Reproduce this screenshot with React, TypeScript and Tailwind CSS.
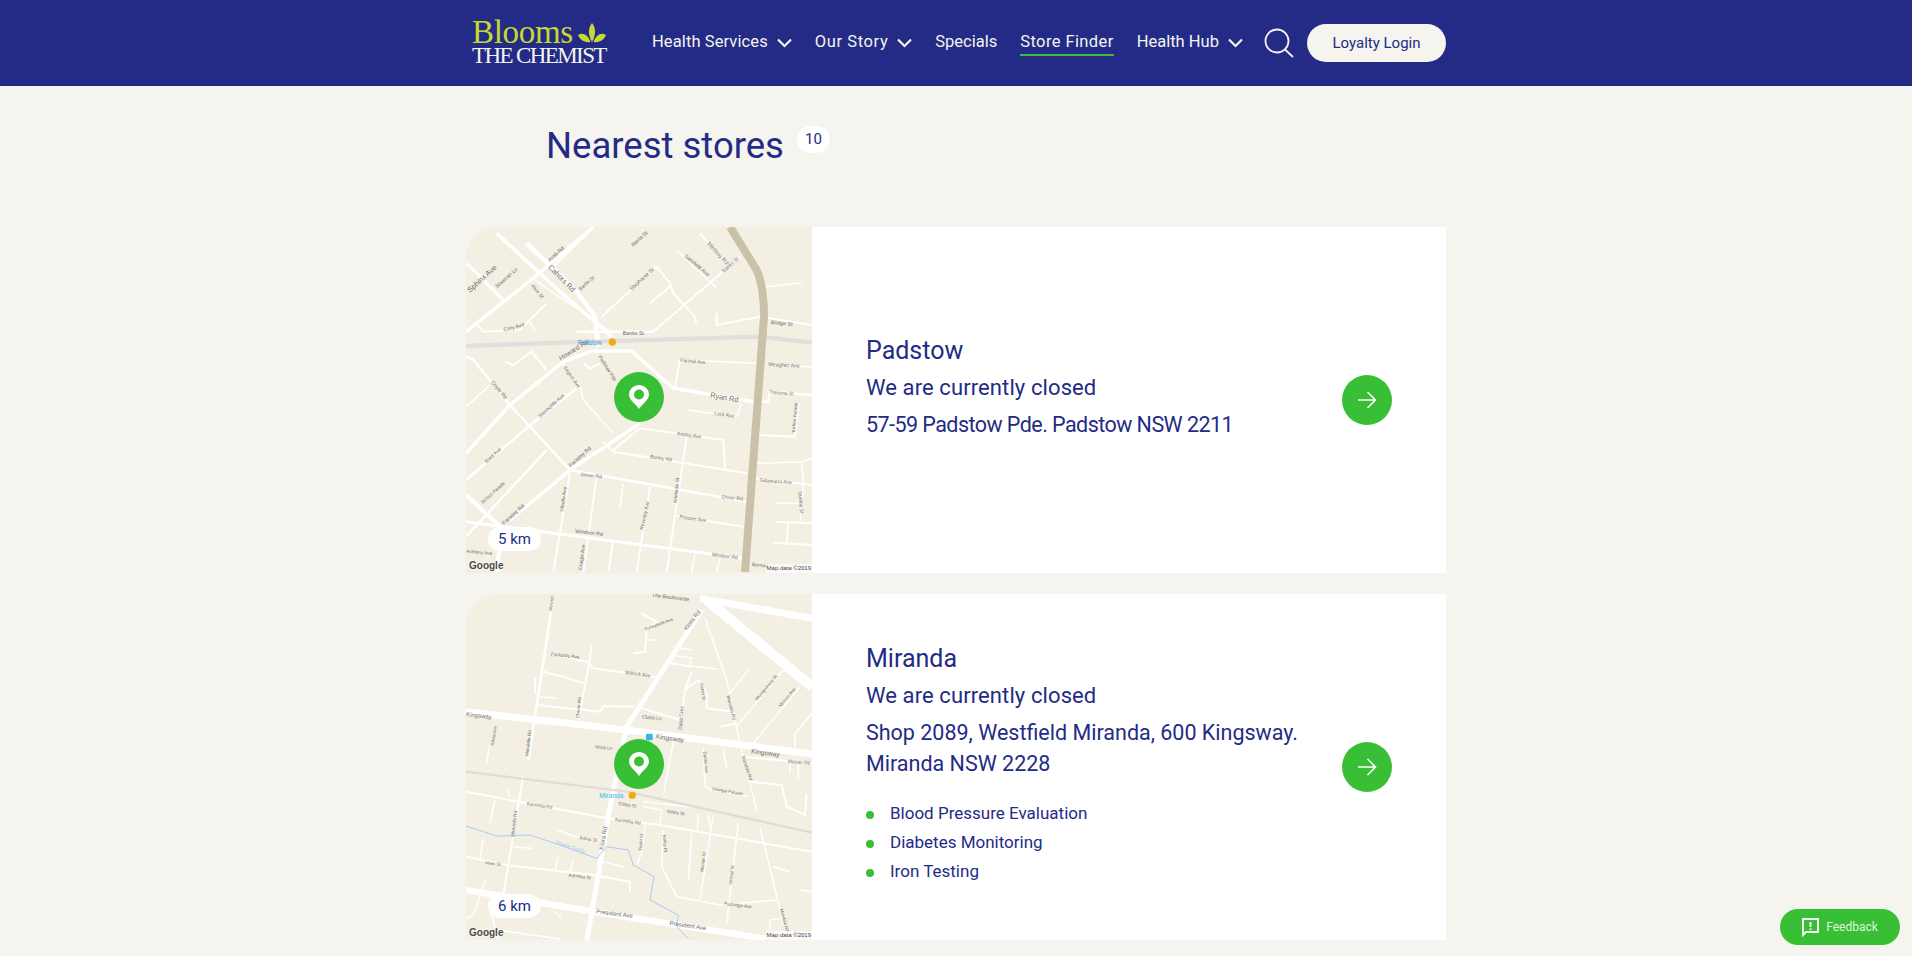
type Road = [number, string];
type Label = [string, number, number, number, number?, string?];

const navy = "text-[#232b86]";

const padstowRoads: Road[] = [
  [7, "18,335 225,170 400,21"],
  [7, "110,40 300,215 455,350"],
  [9, "200,70 350,215 405,290 415,380"],
  [5, "270,150 400,21"],
  [4, "425,290 590,140 630,190 640,220 705,290 708,310"],
  [4, "570,250 635,195"],
  [4, "580,335 840,110"],
  [3, "650,90 770,205"],
  [4, "720,40 800,130"],
  [4, "770,280 770,315 900,290 1056,315"],
  [3, "920,200 1025,188"],
  [6, "20,130 130,240"],
  [4, "50,310 70,335 180,330 260,250"],
  [3, "210,170 460,340"],
  [5, "350,335 580,335"],
  [3, "205,300 225,330"],
  [7, "18,700 150,555 310,425 395,393 515,393"],
  [7, "515,393 640,505 880,545"],
  [5, "880,545 925,545 930,515 1056,525"],
  [4, "660,420 645,500"],
  [3, "660,420 890,430"],
  [3, "920,435 1056,440"],
  [5, "18,410 40,420 150,555 330,750"],
  [3, "18,560 90,495"],
  [4, "135,425 160,435 215,395 260,450"],
  [4, "370,430 390,445 420,430"],
  [3, "310,430 360,500 370,540 460,640"],
  [5, "18,780 205,620 355,500"],
  [5, "18,950 260,690"],
  [7, "150,900 330,750 540,610"],
  [4, "430,665 460,695 860,760"],
  [4, "460,690 540,625 790,660 795,745"],
  [4, "680,650 620,1056"],
  [3, "685,570 830,590 845,550"],
  [5, "330,750 860,845"],
  [4, "330,760 280,1056"],
  [4, "410,770 370,1056"],
  [3, "490,790 480,865"],
  [4, "570,800 530,1056"],
  [4, "650,888 850,920"],
  [6, "18,905 850,1015"],
  [8, "18,825 125,925 110,1056"],
  [4, "460,960 445,1056"],
  [3, "705,1000 695,1056"],
  [3, "780,1015 770,1056"],
  [4, "895,645 1005,650 1015,550"],
  [3, "890,730 1025,725 1056,715"],
  [3, "1025,725 1030,790 1020,910"],
  [4, "885,775 1056,795"],
  [3, "945,850 1020,850"],
  [4, "945,905 1056,910"],
  [4, "940,968 1056,975"],
  [4, "985,910 980,970"],
];

const padstowLabels: Label[] = [
  ["Sphinx Ave", 30, 218, -42, 22],
  ["Sheeran Ln", 112, 205, -42, 16],
  ["Cahors Rd", 263, 143, 45, 22],
  ["Arab Rd", 270, 125, -42, 16],
  ["Iberia St", 520, 80, -42, 16],
  ["Berlin St", 362, 212, -42, 15],
  ["Stephanie St", 515, 212, -42, 16],
  ["Medway Rd", 742, 72, 48, 16],
  ["Sarsfield Ave", 672, 110, 40, 16],
  ["Banks St", 792, 158, -42, 15],
  ["Alice St", 212, 197, 50, 15],
  ["Cory Ave", 132, 335, -15, 16],
  ["Banks St", 488, 345, 0, 16],
  ["Bridge St", 932, 312, 5, 16],
  ["Howard Rd", 302, 422, -32, 20],
  ["Parmal Ave", 660, 425, 5, 15],
  ["Meagher Ave", 925, 438, 3, 16],
  ["Trevone St", 928, 520, 5, 15],
  ["Ryan Rd", 750, 532, 10, 22],
  ["Lock Ave", 762, 585, 8, 15],
  ["Doyle Rd", 92, 488, 50, 16],
  ["Segers Ave", 310, 442, 55, 15],
  ["Padstow Pde", 415, 410, 58, 15],
  ["Shorecliffe Ave", 240, 595, -42, 15],
  ["Ansley Ave", 650, 645, 8, 15],
  ["Burley Rd", 570, 715, 8, 15],
  ["Bard Ave", 80, 730, -42, 15],
  ["Faraday Rd", 332, 742, -42, 16],
  ["Driver Rd", 362, 768, 6, 15],
  ["Driver Rd", 785, 835, 6, 15],
  ["School Parade", 68, 852, -42, 14],
  ["Faraday Rd", 132, 915, -42, 16],
  ["Windsor Rd", 345, 938, 7, 16],
  ["Windsor Rd", 755, 1008, 7, 15],
  ["Prosser Ave", 658, 895, 8, 15],
  ["Tallawarra Ave", 898, 785, 4, 15],
  ["Adelaide St", 650, 850, -84, 15],
  ["Revesby Ave", 550, 930, -78, 15],
  ["Ulladla Ave", 310, 875, -82, 15],
  ["Craigie Ave", 365, 1050, -82, 15],
  ["Trafton Parade", 1005, 640, -85, 14],
  ["Dunlop St", 1015, 815, 85, 15],
  ["Burned", 875, 1038, 5, 15],
  ["Anthony Ave", 18, 998, 5, 14],
  ["Padstow", 353, 374, 0, 19, "#3aa3cf"],
];

const mirandaRoads: Road[] = [
  [20, "740,30 1056,290"],
  [14, "720,25 1056,85"],
  [10, "380,1056 450,650 500,410 725,60"],
  [14, "18,365 500,420 1056,492"],
  [13, "18,900 400,965 920,1047"],
  [5, "280,20 225,380 205,510"],
  [4, "190,555 130,915"],
  [4, "250,245 310,260 370,280"],
  [4, "270,190 380,215 400,235 590,262"],
  [4, "395,165 385,235 355,390"],
  [4, "235,345 420,365 430,348 520,350"],
  [3, "240,320 295,325"],
  [4, "225,265 225,310"],
  [4, "530,350 660,390"],
  [4, "545,70 590,95 560,120 555,185 520,190"],
  [3, "555,150 595,150"],
  [3, "640,170 695,180"],
  [3, "635,195 695,205 690,230 620,215"],
  [3, "620,220 775,238"],
  [4, "695,245 675,300 660,420"],
  [4, "675,300 715,270 740,310 740,355 820,365"],
  [3, "735,85 800,270 840,460 890,660"],
  [3, "810,310 865,240"],
  [3, "830,410 970,240"],
  [3, "880,460 1020,290"],
  [4, "780,410 830,400"],
  [3, "1005,470 1005,430 1056,370"],
  [3, "640,455 610,615"],
  [3, "730,470 735,590 755,600 870,620"],
  [3, "790,480 800,535"],
  [4, "850,500 1056,520"],
  [3, "990,510 990,550"],
  [3, "1015,515 1015,570"],
  [4, "870,575 965,585 980,650 1035,675 1040,610"],
  [3, "90,460 80,520"],
  [4, "18,605 440,685 600,705 1056,785"],
  [3, "140,595 150,620"],
  [3, "105,630 90,700"],
  [3, "550,635 690,650"],
  [3, "550,650 605,660 600,705"],
  [3, "715,672 712,725"],
  [3, "760,675 720,930"],
  [3, "745,675 750,715"],
  [3, "695,730 685,870"],
  [3, "835,698 800,1000"],
  [3, "900,712 970,1000"],
  [3, "610,720 605,830 650,920 780,945 950,930"],
  [3, "290,720 360,745 420,750"],
  [3, "160,770 215,775"],
  [4, "18,800 140,825 400,855 510,875 510,905"],
  [3, "295,795 285,845"],
  [3, "340,810 330,850"],
  [3, "70,745 60,810"],
  [3, "430,815 490,830"],
  [3, "555,705 545,790 530,825"],
  [3, "940,830 990,845"],
  [3, "1020,900 1056,905"],
  [3, "75,870 40,975 20,985"],
  [3, "930,1020 930,990 965,985"],
  [3, "285,965 305,985"],
  [3, "90,960 115,1047"],
  [3, "115,1020 300,1047"],
];

const mirandaLabels: Label[] = [
  ["The Boulevarde", 575, 20, 7, 16],
  ["Waratah", 275, 65, -82, 13],
  ["Sunnybank Ave", 555, 122, -20, 13],
  ["Kiora Rd", 680, 122, -52, 18],
  ["Parkside Ave", 272, 197, 6, 15],
  ["Willock Ave", 495, 252, 8, 15],
  ["Aisher St", 720, 280, 80, 13],
  ["Clubb Ln", 545, 385, 6, 15],
  ["Dabb Cres", 665, 420, -85, 15],
  ["Cherie Rd", 358, 385, -85, 14],
  ["Kingsway", 18, 378, 7, 18],
  ["Kingsway", 587, 445, 8, 20],
  ["Kingsway", 873, 490, 7, 20],
  ["Mulyan Rd", 983, 518, 5, 14],
  ["Mandala Rd", 800, 318, 75, 14],
  ["Montgomery St", 892, 332, -50, 14],
  ["Vernon Ave", 962, 352, -50, 14],
  ["Sylvia Ave", 100, 468, -80, 13],
  ["Wandella Rd", 205, 500, -83, 14],
  ["Nicra Ln", 405, 475, 5, 14],
  ["Dartler Ave", 730, 485, 85, 13],
  ["Mandala Rd", 845, 500, 72, 14],
  ["Urunga Parade", 755, 600, 10, 14],
  ["Karimbla Rd", 200, 645, 9, 14],
  ["Gibbs St", 475, 645, 9, 14],
  ["Gibbs St", 620, 668, 9, 14],
  ["Karimbla Rd", 465, 692, 9, 14],
  ["Wandella Rd", 162, 742, -83, 14],
  ["Adina St", 358, 748, 8, 14],
  ["Kiora Rd", 430, 780, -80, 18],
  ["Taylor Cl", 545, 782, -85, 13],
  ["Kirkby Pl", 608, 735, 85, 13],
  ["Moolah St", 730, 845, -83, 13],
  ["Wrexall St", 815, 885, -83, 13],
  ["View St", 75, 822, 7, 14],
  ["Adi'mba St", 325, 860, 7, 14],
  ["Partridge Ave", 792, 945, 7, 14],
  ["Mandala Rd", 960, 958, 75, 13],
  ["President Ave", 408, 970, 7, 18],
  ["President Ave", 628, 1005, 8, 18],
  ["Yowie Gully", 285, 762, 18, 18, "#a8cdf2"],
  ["Miranda", 418, 623, 0, 20, "#35b5f0"],
];

const services = ["Blood Pressure Evaluation", "Diabetes Monitoring", "Iron Testing"];

function MapArt({
  roads,
  labels,
  top,
  children,
  marks,
}: {
  roads: Road[];
  labels: Label[];
  top: number;
  children: React.ReactNode;
  marks: React.ReactNode;
}) {
  return (
    <svg viewBox={`18 ${top} 1038 1038`} className="block w-full h-full" fontFamily="Liberation Sans, sans-serif">
      <rect x="18" y={top} width="1038" height="1038" fill="#f3efe3" />
      {roads.map(([w, pts], i) => (
        <polyline key={i} points={pts} fill="none" stroke="#ffffff" strokeWidth={w * 1.5} strokeLinejoin="round" />
      ))}
      {children}
      {labels.map(([txt, x, y, rot, size = 15, fill = "#6f6d68"], i) => (
        <text key={i} x={x} y={y} fontSize={size} fill={fill} transform={`rotate(${rot} ${x} ${y})`}>
          {txt}
        </text>
      ))}
      {marks}
    </svg>
  );
}

function MapFooter() {
  return (
    <>
      <span className="absolute left-[3px] bottom-[2px] text-[10px] leading-none font-bold text-[#4a4a4a] [text-shadow:0_0_2px_#fff] font-['Liberation_Sans',sans-serif]">
        Google
      </span>
      <span className="absolute right-0 bottom-0 bg-white/70 px-[1px] text-[6px] leading-[9px] text-[#444444] font-['Liberation_Sans',sans-serif]">
        Map data ©2019
      </span>
    </>
  );
}

function Pin() {
  return (
    <div className="absolute left-[148px] top-[145px] w-[50px] h-[50px] rounded-full bg-[#39bf35] flex items-center justify-center">
      <svg width="20" height="24" viewBox="0 0 20 24">
        <path d="M10 24 C7 19 0 15 0 9.5 A10 9.5 0 0 1 20 9.5 C20 15 13 19 10 24 Z" fill="#ffffff" />
        <circle cx="10" cy="9.5" r="5" fill="#39bf35" />
      </svg>
    </div>
  );
}

function StoreCard({
  name,
  address,
  addressClass,
  distance,
  list,
  art,
}: {
  name: string;
  address: React.ReactNode;
  addressClass: string;
  distance: string;
  list?: string[];
  art: React.ReactNode;
}) {
  return (
    <div className="flex h-[346px]">
      <div className="relative w-[346px] shrink-0 overflow-hidden rounded-tl-[32px]">
        {art}
        <Pin />
        <span className={`absolute left-[22px] bottom-[22px] h-[24px] w-[53px] rounded-[12px] bg-white flex items-center justify-center text-[15px] ${navy}`}>
          {distance}
        </span>
        <MapFooter />
      </div>
      <div className="flex-1 bg-white flex items-center pl-[54px] pr-[54px]">
        <div className={`flex-1 ${navy}`}>
          <h2 className="text-[25px] leading-[32px] mb-[5px]">{name}</h2>
          <p className="text-[22px] leading-[31px] mb-[6px] tracking-[0.1px]">We are currently closed</p>
          <p className={`text-[21.5px] leading-[31px] whitespace-nowrap ${addressClass}`}>{address}</p>
          {list ? (
            <ul className="mt-[21px] pb-[5px]">
              {list.map((s) => (
                <li key={s} className="flex items-center h-[29px] text-[17px]">
                  <span className="w-[8px] h-[8px] rounded-full bg-[#39bf35] mr-[16px] mt-[2px]" />
                  {s}
                </li>
              ))}
            </ul>
          ) : (
            <div className="h-[25px]" />
          )}
        </div>
        <div className="w-[50px] h-[50px] rounded-full bg-[#39bf35] flex items-center justify-center shrink-0">
          <svg width="20" height="20" viewBox="0 0 20 20" fill="none" stroke="#ffffff" strokeWidth="1.6">
            <path d="M1 10 H18.5 M10.5 2 L18.5 10 L10.5 18" />
          </svg>
        </div>
      </div>
    </div>
  );
}

function NavLink({
  label,
  spacing,
  arrow,
  active,
}: {
  label: string;
  spacing: string;
  arrow?: boolean;
  active?: boolean;
}) {
  return (
    <a className={`flex items-center gap-[9px] text-[16.5px] text-[#f5f4ee] whitespace-nowrap ${spacing}`}>
      <span className={`leading-[25px] mt-[-2px] border-b-2 ${active ? "border-[#39bf35]" : "border-transparent"}`}>{label}</span>
      {arrow && (
        <svg width="15" height="10" viewBox="0 0 15 10" fill="none" stroke="#f5f4ee" strokeWidth="2.2">
          <path d="M1 1.5 L7.5 8 L14 1.5" />
        </svg>
      )}
    </a>
  );
}

export default function App() {
  return (
    <div className="h-[956px] overflow-hidden bg-[#f5f4ee] font-['Roboto',sans-serif]">
      <header className="h-[86px] bg-[#232b86]">
        <div className="w-[980px] ml-[466px] h-full flex items-center">
          <div className="w-[146px] pl-[6px] font-['Liberation_Serif',serif] shrink-0 mt-[-2px]">
            <div className="flex items-start h-[27px]">
              <span className="text-[33px] leading-[26px] tracking-[-0.3px] text-[#c6d92f]">Blooms</span>
              <svg width="28" height="20" viewBox="0 0 28 20" className="ml-[5px] mt-[4px]" fill="#c6d92f">
                <path d="M14 0 C18 5 18 12 14 19 C10 12 10 5 14 0 Z" />
                <path d="M0 12 C5 9 10 12 12.5 19 C7 20 2 17 0 12 Z" />
                <path d="M28 12 C23 9 18 12 15.5 19 C21 20 26 17 28 12 Z" />
              </svg>
            </div>
            <div className="text-[23px] leading-[20px] tracking-[-1.6px] text-[#f5f4ee] whitespace-nowrap">THE CHEMIST</div>
          </div>
          <nav className="flex items-center gap-[23px] ml-[40px]">
            <NavLink label="Health Services" spacing="tracking-[0.1px]" arrow />
            <NavLink label="Our Story" spacing="tracking-[0.6px]" arrow />
            <NavLink label="Specials" spacing="tracking-[0px]" />
            <NavLink label="Store Finder" spacing="tracking-[0.4px]" active />
            <NavLink label="Health Hub" spacing="tracking-[0px]" arrow />
          </nav>
          <svg width="30" height="30" viewBox="0 0 30 30" fill="none" stroke="#f5f4ee" strokeWidth="1.8" className="ml-[21px] shrink-0">
            <circle cx="13" cy="13" r="11.5" />
            <path d="M21 21.5 L29 29" />
          </svg>
          <a className={`ml-auto w-[139px] h-[38px] rounded-[19px] bg-[#f5f4ee] flex items-center justify-center text-[15px] ${navy}`}>
            Loyalty Login
          </a>
        </div>
      </header>

      <main className="w-[980px] ml-[466px]">
        <div className="flex items-start pl-[80px] pt-[37px] h-[141px]">
          <h1 className={`text-[36.5px] leading-[46px] ${navy}`}>Nearest stores</h1>
          <span className={`ml-[13px] mt-[3px] w-[33px] h-[27px] rounded-[14px] bg-white flex items-center justify-center text-[15px] ${navy}`}>
            10
          </span>
        </div>
        <div className="flex flex-col gap-[21px]">
          <StoreCard
            name="Padstow"
            address="57-59 Padstow Pde. Padstow NSW 2211"
            addressClass="tracking-[-0.55px]"
            distance="5 km"
            art={
              <MapArt
                roads={padstowRoads}
                labels={padstowLabels}
                top={21}
                marks={<circle cx="457" cy="366" r="11" fill="#f0ab14" />}
              >
                <polyline points="18,378 300,368 500,362 900,350 1056,368" fill="none" stroke="#dfdfdc" strokeWidth="13" />
                <path d="M810 21 L890 150 Q912 200 912 290 L855 1056" fill="none" stroke="#c9c1a8" strokeWidth="24" />
              </MapArt>
            }
          />
          <StoreCard
            name="Miranda"
            address={
              <>
                Shop 2089, Westfield Miranda, 600 Kingsway.
                <br />
                Miranda NSW 2228
              </>
            }
            addressClass="tracking-[0px]"
            distance="6 km"
            list={services}
            art={
              <MapArt
                roads={mirandaRoads}
                labels={mirandaLabels}
                top={12}
                marks={
                  <>
                    <rect x="558" y="431" width="20" height="20" rx="3" fill="#35b5f0" />
                    <circle cx="517" cy="616" r="11" fill="#f0ab14" />
                  </>
                }
              >
                <polyline points="18,545 500,605 1056,728" fill="none" stroke="#dedcd6" strokeWidth="7" />
                <polyline points="18,708 110,738 210,735 300,765 410,805 440,770 505,780 520,825 582,860 570,930 655,975 650,1010 685,1047" fill="none" stroke="#a8cdf2" strokeWidth="3" />
              </MapArt>
            }
          />
        </div>
      </main>

      <button className="fixed right-[12px] bottom-[11px] w-[120px] h-[36px] rounded-[18px] bg-[#39bf35] flex items-center justify-center gap-[7px] text-[12px] text-[#dff5dd]">
        <svg width="17" height="20" viewBox="0 0 17 20" fill="none">
          <path d="M1 2 H16 V15 H4 L1 18 Z" stroke="#ffffff" strokeWidth="1.8" />
          <path d="M8.5 5 V10 M8.5 11.5 V13" stroke="#ffffff" strokeWidth="1.8" />
        </svg>
        Feedback
      </button>
    </div>
  );
}
